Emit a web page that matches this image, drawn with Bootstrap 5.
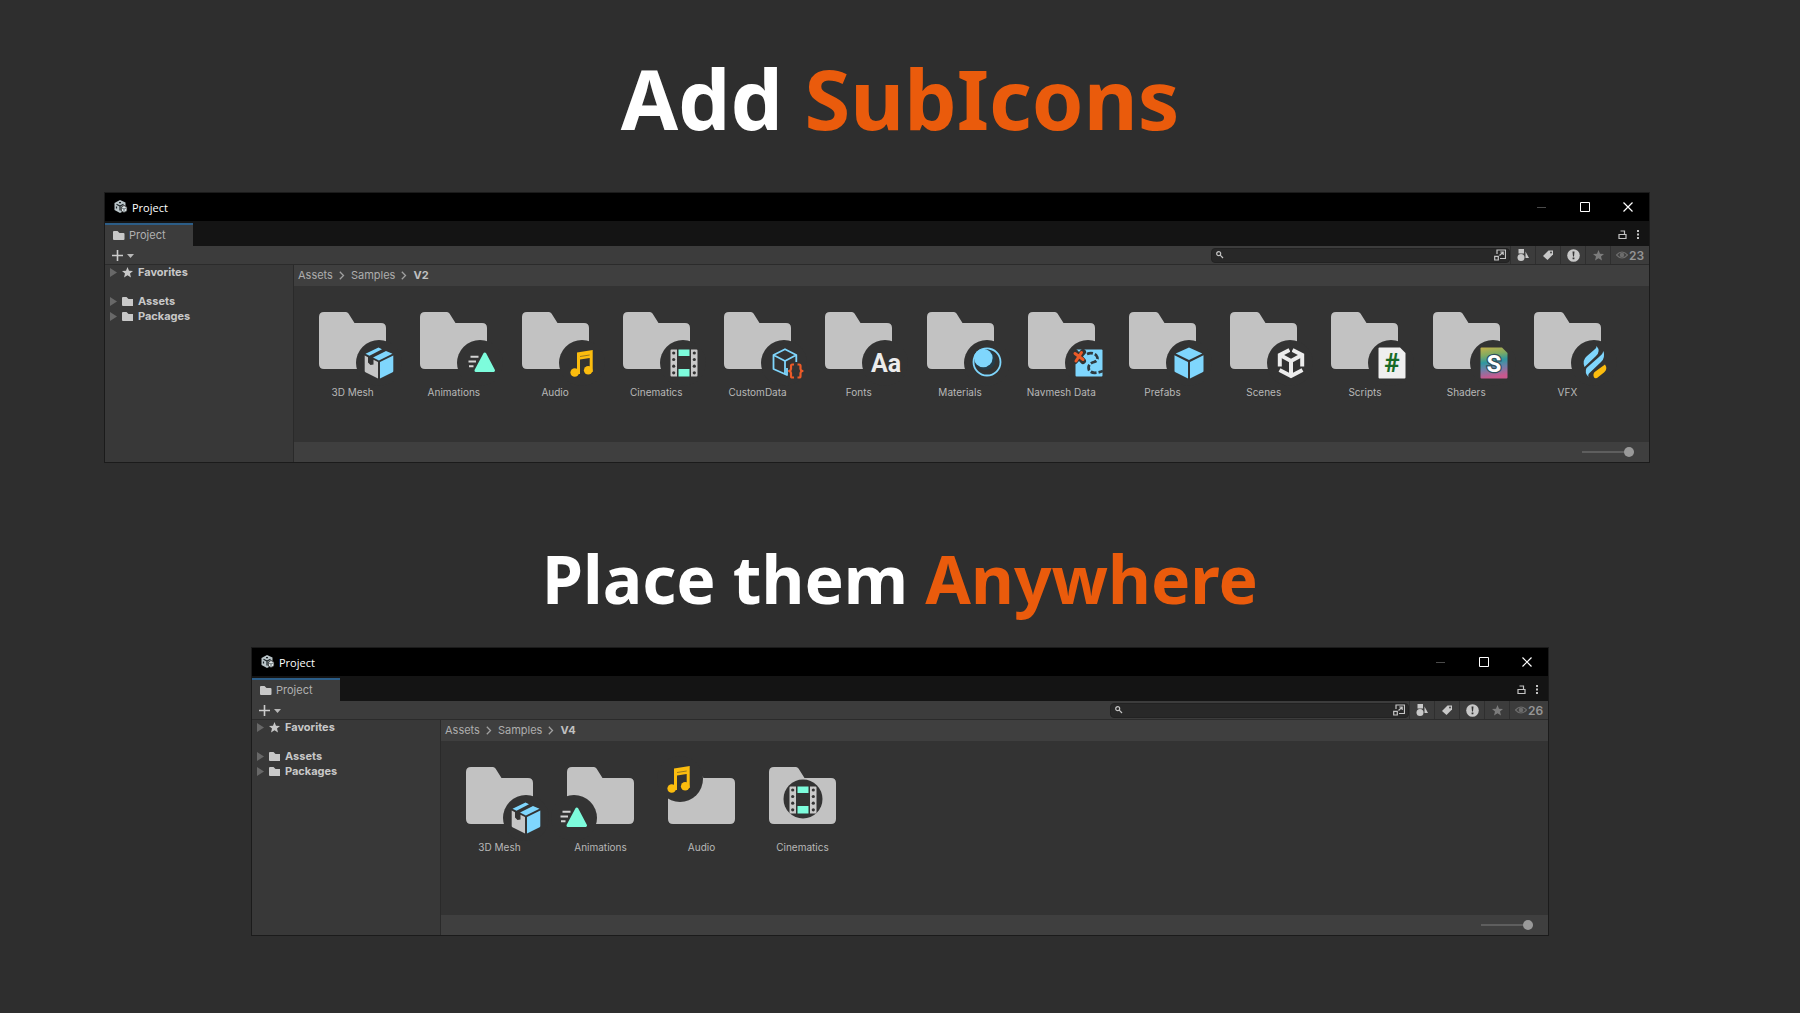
<!DOCTYPE html>
<html lang="en">
<head>
<meta charset="utf-8">
<meta name="viewport" content="width=device-width, initial-scale=1">
<title>SubIcons</title>
<link rel="stylesheet" href="https://cdn.jsdelivr.net/npm/bootstrap@5.3.0/dist/css/bootstrap.min.css">
<script src="https://cdn.jsdelivr.net/npm/bootstrap@5.3.0/dist/js/bootstrap.bundle.min.js"></script>
<style>
body{background:#2e2e2e;color:#bdbdbd;font-family:Inter,"Liberation Sans",sans-serif;font-size:12px;line-height:15px}
.headline{font-family:"Noto Sans","Open Sans",sans-serif;font-weight:700;color:#fff}
.headline em{font-style:normal;color:#ea5b0c}
.headline-lg{font-size:83px;line-height:100px;padding-top:48px;margin-bottom:44px}
.headline-md{font-size:66px;line-height:80px;padding-top:75px;margin-bottom:29px}
svg{display:block;flex:none}
button{background:none;border:0;padding:0;color:inherit;font:inherit}
.win{border:1px solid #1b1b1b;background:#383838}
.win-wide{margin-left:104px;margin-right:150px;height:271px}
.win-narrow{margin-left:251px;margin-right:251px;height:289px}
.titlebar{height:28px;background:#000;color:#fff;font-family:"Open Sans","Noto Sans",sans-serif;font-size:11px;padding-left:9px}
.titlebar .caption-btn{width:43px;height:28px}
.tabstrip{height:25px;background:#141414;padding-top:2px;padding-right:6px}
.tab{width:88px;background:#3c3c3c;border-top:2px solid #2c5d87;color:#b0b0b0;padding-left:8px;font-size:11px}
.tab-tools{gap:6px}
.toolbar{height:19px;background:#3c3c3c;border-bottom:1px solid #2b2b2b;padding-left:7px}
.searchbox{width:299px;height:15px;background:#282828;border:1px solid #222;border-radius:4px;padding:0 3px 0 4px}
.searchbox input{background:none;border:0;outline:0;height:12px;padding:0 4px;color:#ccc;font-size:11px;min-width:0}
.tool{width:24px;height:18px;border-left:1px solid #2f2f2f;box-sizing:content-box}
.tool-count{width:38px;color:#959595;font-weight:600;gap:1px}
.side{width:189px;background:#383838;border-right:1px solid #2a2a2a;font-weight:700;font-size:11px;color:#c8c8c8;padding-left:5px}
.side a{color:inherit;text-decoration:none;height:15px;gap:5px}
.side .gap-after{margin-bottom:14px}
.crumbs{height:21px;background:#3f3f3f;padding-left:4px;gap:6px;font-size:11px;color:#adadad;margin:0}
.crumbs a{color:inherit;text-decoration:none}
.crumbs b{font-weight:700;color:#c0c0c0}
.files{background:#333;padding-top:22px;padding-left:8px}
.files-fill{padding-right:31px}
.files-fill .item{flex:1 1 0}
.item{width:101px;font-size:10px;line-height:12px;color:#b8b8b8;text-decoration:none;text-align:center}
.item svg{overflow:visible}
.item span{margin-top:2px}
.foot{height:20px;background:#3f3f3f;padding-right:15px}
.size-range{appearance:none;-webkit-appearance:none;width:52px;height:10px;background:none;margin:0}
.size-range::-webkit-slider-runnable-track{height:2px;background:#5e5e5e}
.size-range::-webkit-slider-thumb{-webkit-appearance:none;width:10px;height:10px;border-radius:50%;background:#999;margin-top:-4px}
svg text{font-family:Roboto,"Liberation Sans",sans-serif;font-weight:700}
</style>
</head>
<body>
<svg width="0" height="0" class="position-absolute" aria-hidden="true">
<defs>
<linearGradient id="rainbow" x1="0" y1="0" x2="0.15" y2="1"><stop offset="0" stop-color="#c3b04a"/><stop offset=".28" stop-color="#7faa62"/><stop offset=".5" stop-color="#2e98a0"/><stop offset=".72" stop-color="#6f7fa8"/><stop offset="1" stop-color="#c9588f"/></linearGradient>
<path id="folder" fill="#c2c2c2" d="M5 0H27Q28.500 0 29.500 1.500L35.500 11H62Q67 11 67 16V52Q67 57 62 57H5Q0 57 0 52V5Q0 0 5 0Z"/>
<circle id="cut" r="23" fill="#333"/>
<g id="s-mesh">
<path fill="#c6c6c6" d="M-14.300-7.500-11-5.700V-.500L-8.500 2-5.500 1.500V-3.200L-1-1V15.500L-13.500 9.200Q-14.300 8.700-14.300 8Z"/>
<path fill="#7fd6fd" d="M1-1 14.300-7.500V8Q14.300 8.700 13.600 9.200L1 15.500ZM-13.500-9.300-.500-15.500 3-13.800-9.500-7.300ZM-6-5.400 7-12 13.500-9.300-.100-2.600Z"/>
</g>
<g id="s-anim">
<path fill="#7dfcdc" stroke="#7dfcdc" stroke-width="3" stroke-linejoin="round" d="M4.800-9 13.500 7.500H-4Z"/>
<path stroke="#d4d4d4" stroke-width="2" d="M-9.500-6.300H-1.500M-11.500-1.500H-4M-11 3.300H-6.500"/>
</g>
<g id="s-audio" fill="#fbbc0e">
<path d="M-5-10.500 10.700-13V9H7.700V-5L-2-3.500V11H-5Z"/><circle cx="-7.300" cy="9.500" r="4.300"/><circle cx="6.200" cy="7.300" r="4.300"/><path stroke="#333" stroke-width=".5" d="M-2-6.500 7.700-8"/>
</g>
<g id="s-film">
<path fill="#c9c9c9" d="M-12.500-13.500H-7V13.500H-12.500Q-13.500 13.500-13.500 12.500V-12.500Q-13.500-13.500-12.500-13.500ZM7-13.500H12.500Q13.500-13.500 13.500-12.500V12.500Q13.500 13.500 12.500 13.500H7Z"/>
<path fill="#7dfcdc" d="M-5.500-13.500H5.500V-7H-5.500ZM-5.500 6H5.500V13.500H-5.500Z"/>
<g fill="#333"><circle cx="-10.300" cy="-10" r="1.600"/><circle cx="-10.300" cy="-3.500" r="1.600"/><circle cx="-10.300" cy="3.200" r="1.600"/><circle cx="-10.300" cy="9.800" r="1.600"/><circle cx="10.300" cy="-10" r="1.600"/><circle cx="10.300" cy="-3.500" r="1.600"/><circle cx="10.300" cy="3.200" r="1.600"/><circle cx="10.300" cy="9.800" r="1.600"/></g>
</g>
<g id="s-data">
<path fill="none" stroke="#7fd6fd" stroke-width="1.800" stroke-linejoin="round" d="M3 5V12L-10.500 6V-8L1-13.800 12.300-8V-1M-10.500-8 1-2 12.300-8M1-2V11.300"/>
<rect x="4" y="0" width="16" height="16" fill="#333"/>
<g fill="none" stroke="#ec5b28" stroke-width="2.200" stroke-linejoin="round"><path d="M10 1.500H8.300Q7 1.500 7 3V6Q7 7.500 5 8Q7 8.500 7 10V13Q7 14.500 8.300 14.500H10"/><path d="M13.500 1.500H15.200Q16.500 1.500 16.500 3V6Q16.500 7.500 18.500 8Q16.500 8.500 16.500 10V13Q16.500 14.500 15.200 14.500H13.500"/></g>
</g>
<text id="s-font" x="1" y="9" font-size="25" text-anchor="middle" fill="#ececec">Aa</text>
<g id="s-mat"><circle r="13.500" fill="#333" stroke="#7fd6fd" stroke-width="1.800"/><circle cx="-2" cy="-2.500" r="10.500" fill="#253c49"/><circle cx="-3.700" cy="-4" r="9.300" fill="#7fd6fd"/></g>
<g id="s-nav">
<rect x="-13.500" y="-13.500" width="27" height="27" rx="1" fill="#7fd6fd"/>
<path fill="none" stroke="#2f3a40" stroke-width="2.800" stroke-dasharray="6 2" d="M-2-9Q3-11 7-8Q11-3 5-1Q-2 1 0 7Q3 12 14 8"/>
<path stroke="#333" stroke-width="6" stroke-linecap="round" d="M-14-11-6-2M-6-11-14-2"/>
<path stroke="#ec5b28" stroke-width="3" stroke-linecap="round" d="M-14-9.500-6-3.500M-7.500-10.500-13-2"/>
</g>
<g id="s-cube" fill="#7fd6fd"><path d="M0-15.500 13.300-9.500 0-3 -13.300-9.500ZM-14.500-7.700-1-1V15.500L-14 9Q-14.500 8.700-14.500 8ZM14.500-7.700 1-1V15.500L14 9Q14.500 8.700 14.500 8Z"/></g>
<g id="s-scene" fill="none" stroke="#ececec" stroke-width="4">
<path d="M-1.500-13-11.200-8V3.500M1.500-13 11.200-8V3.500M-11.500 7 0 13 11.500 7"/><path d="M-11-8 0-2 11-8M0-2V13"/><path stroke="#333" stroke-width="2" d="M0-16V-8"/>
</g>
<g id="s-script"><path fill="#efefef" d="M-12.500-15.500H8L13.500-10V14.500Q13.500 15.500 12.500 15.500H-12.500Q-13.500 15.500-13.500 14.500V-14.500Q-13.500-15.500-12.500-15.500Z"/><text y="9" font-size="26" text-anchor="middle" fill="#176b26">#</text></g>
<g id="s-shader"><path fill="url(#rainbow)" d="M-12.500-15.500H8L13.500-10V14.500Q13.500 15.500 12.500 15.500H-12.500Q-13.500 15.500-13.500 14.500V-14.500Q-13.500-15.500-12.500-15.500Z"/><text y="9" font-size="24" text-anchor="middle" fill="#fff" stroke="#30505c" stroke-width="2.500" paint-order="stroke">S</text></g>
<g id="s-vfx"><path fill="#7fd6fd" d="M1.500-17Q6-12 1-7L-10.500 4Q-13-3-8-7L-1-13Q2-15 1.500-17ZM8.500-12Q10.500-5 6-1L-5 9.500Q-8 12-6 14.500Q-11 10-8.500 5L4-6Q8-9 8.500-12Z"/><path fill="#fbbc0e" d="M10 1.500Q13 6 9 9.500L2 15Q-2 16-1.500 11Q-1 9 1 8Z"/></g>
<g id="i-folder"><path fill="#c8c8c8" d="M1 0H4.500L6.500 2H10.500Q11.500 2 11.500 3V8Q11.500 9 10.500 9H1Q0 9 0 8V1Q0 0 1 0Z"/></g>
<path id="i-star" d="M5.500 0 7 3.700 11 4 8 6.500 9 10.500 5.500 8.300 2 10.500 3 6.500 0 4 4 3.700Z"/>
<path id="i-arrow" fill="#686868" d="M0 0 7 4.500 0 9Z"/>
<g id="i-app"><path fill="#b9c4c8" d="M6 0 11.500 2.500V7L8 12 6 13 .500 10V3Z"/><path stroke="#1c2326" fill="none" stroke-width="1.200" d="M2.500 4.300 6 6 9.500 4.300M6 6V10.500M2.500 6.500V8.500M5 2.700H7"/><path fill="#dfe6e8" stroke="#111" stroke-width=".8" d="M10 5.500 13 7V11L10 12.700 7.300 11V7Z"/><path stroke="#59666b" stroke-width=".9" d="M10 9V12M10 9 12 8M10 9 8 8"/></g>
<g id="i-lock" fill="none" stroke="#c4c4c4" stroke-width="1.200"><path d="M1 4.500H8V8.500H1ZM2.500 1H6.500V4.500"/></g>
<g id="i-dots" fill="#c4c4c4"><path d="M0 0H2V2H0ZM0 3.500H2V5.500H0ZM0 7H2V9H0Z"/></g>
<g id="i-plus"><path stroke="#ccc" stroke-width="1.600" d="M0 5.500H11M5.500 0V11"/><path fill="#b8b8b8" d="M15 4H22L18.500 8Z"/></g>
<g id="i-glass" fill="none" stroke="#c4c4c4" stroke-width="1.200"><circle cx="2.700" cy="2.700" r="2"/><path d="M4.200 4.200 7 7"/></g>
<g id="i-pop" fill="none" stroke="#c4c4c4" stroke-width="1.200"><path d="M3 5V1H11.500V9.500H6M.700 7.300H4.300V11H.700ZM5.500 6.500 9 3.200M6.300 3H9.200V6"/></g>
<g id="i-types" fill="#c8c8c8"><path d="M1.500 0H7V4.500H1.500ZM8.500 2.500 12 9H8.500Z"/><circle cx="4" cy="8.500" r="3.500"/></g>
<g id="i-tag"><path fill="#c8c8c8" d="M5.500.500H10V4.500L4.500 10 0 6Z"/><circle cx="8" cy="2.500" r=".9" fill="#3c3c3c"/></g>
<g id="i-warn"><circle cx="6.500" cy="6.500" r="6.300" fill="#c8c8c8"/><path fill="#333" d="M5.500 2.500H7.500L7 7.500H6ZM5.600 8.500H7.400V10.300H5.600Z"/></g>
<g id="i-eye"><path fill="none" stroke="#6c6c6c" stroke-width="1.200" d="M.500 4Q6-2 11.500 4Q6 10 .500 4Z"/><circle cx="6" cy="4" r="2.300" fill="#6c6c6c"/></g>
<path id="i-chev" fill="none" stroke="#a0a0a0" stroke-width="1.300" d="M.800.800 4.500 4.500.800 8.200"/>
</defs>
</svg>

<main>
<h1 class="headline headline-lg text-center">Add <em>SubIcons</em></h1>

<section class="win win-wide d-flex flex-column" aria-label="Project window V2">
  <header class="titlebar d-flex align-items-center">
    <svg width="14" height="14"><use href="#i-app"/></svg><span class="ms-1">Project</span>
    <div class="ms-auto d-flex">
      <button class="caption-btn d-flex align-items-center justify-content-center" aria-label="Minimize"><svg width="10" height="10"><path stroke="#4a4a4a" d="M0 5.500H9"/></svg></button>
      <button class="caption-btn d-flex align-items-center justify-content-center" aria-label="Maximize"><svg width="10" height="10"><path stroke="#fff" fill="none" d="M.500.500H9.500V9.500H.500Z"/></svg></button>
      <button class="caption-btn d-flex align-items-center justify-content-center" aria-label="Close"><svg width="10" height="10"><path stroke="#fff" stroke-width="1.200" d="M.500.500 9.500 9.500M9.500.500.500 9.500"/></svg></button>
    </div>
  </header>
  <div class="tabstrip d-flex">
    <button class="tab d-flex align-items-center"><svg width="12" height="9" class="me-1"><use href="#i-folder"/></svg>Project</button>
    <div class="ms-auto d-flex align-items-center tab-tools"><button aria-label="Lock"><svg width="9" height="9"><use href="#i-lock"/></svg></button><button class="px-1" aria-label="Menu"><svg width="2" height="9"><use href="#i-dots"/></svg></button></div>
  </div>
  <div class="toolbar d-flex align-items-center">
    <button aria-label="Create"><svg width="22" height="11"><use href="#i-plus"/></svg></button>
    <div class="searchbox d-flex align-items-center ms-auto"><svg width="8" height="8"><use href="#i-glass"/></svg><input class="flex-grow-1" type="search" aria-label="Search assets"><svg width="12" height="12"><use href="#i-pop"/></svg></div>
    <button class="tool d-flex align-items-center justify-content-center" aria-label="Filter by type"><svg width="12" height="12"><use href="#i-types"/></svg></button>
    <button class="tool d-flex align-items-center justify-content-center" aria-label="Filter by label"><svg width="10" height="10"><use href="#i-tag"/></svg></button>
    <button class="tool d-flex align-items-center justify-content-center" aria-label="Filter by log"><svg width="13" height="13"><use href="#i-warn"/></svg></button>
    <button class="tool d-flex align-items-center justify-content-center" aria-label="Save search"><svg width="11" height="11" fill="#7c7c7c"><use href="#i-star"/></svg></button>
    <button class="tool tool-count d-flex align-items-center justify-content-center"><svg width="12" height="8"><use href="#i-eye"/></svg>23</button>
  </div>
  <div class="d-flex flex-grow-1">
    <nav class="side flex-shrink-0" aria-label="Folders">
      <a href="#" class="d-flex align-items-center gap-after"><svg width="7" height="9"><use href="#i-arrow"/></svg><svg width="11" height="11" fill="#c8c8c8"><use href="#i-star"/></svg>Favorites</a>
      <a href="#" class="d-flex align-items-center"><svg width="7" height="9"><use href="#i-arrow"/></svg><svg width="11" height="9"><use href="#i-folder"/></svg>Assets</a>
      <a href="#" class="d-flex align-items-center"><svg width="7" height="9"><use href="#i-arrow"/></svg><svg width="11" height="9"><use href="#i-folder"/></svg>Packages</a>
    </nav>
    <div class="flex-grow-1 d-flex flex-column">
      <nav class="crumbs d-flex align-items-center" aria-label="Path"><a href="#">Assets</a><svg width="6" height="9"><use href="#i-chev"/></svg><a href="#">Samples</a><svg width="6" height="9"><use href="#i-chev"/></svg><b>V2</b></nav>
      <div class="files files-fill d-flex flex-grow-1">
        <a href="#" class="item d-flex flex-column align-items-center"><svg width="83" height="76" viewBox="-8 -4 83 76"><use href="#folder"/><use href="#cut" x="60" y="51"/><use href="#s-mesh" x="60" y="51"/></svg><span>3D Mesh</span></a>
        <a href="#" class="item d-flex flex-column align-items-center"><svg width="83" height="76" viewBox="-8 -4 83 76"><use href="#folder"/><use href="#cut" x="60" y="51"/><use href="#s-anim" x="60" y="51"/></svg><span>Animations</span></a>
        <a href="#" class="item d-flex flex-column align-items-center"><svg width="83" height="76" viewBox="-8 -4 83 76"><use href="#folder"/><use href="#cut" x="60" y="51"/><use href="#s-audio" x="60" y="51"/></svg><span>Audio</span></a>
        <a href="#" class="item d-flex flex-column align-items-center"><svg width="83" height="76" viewBox="-8 -4 83 76"><use href="#folder"/><use href="#cut" x="60" y="51"/><use href="#s-film" x="61" y="51"/></svg><span>Cinematics</span></a>
        <a href="#" class="item d-flex flex-column align-items-center"><svg width="83" height="76" viewBox="-8 -4 83 76"><use href="#folder"/><use href="#cut" x="60" y="51"/><use href="#s-data" x="60" y="51"/></svg><span>CustomData</span></a>
        <a href="#" class="item d-flex flex-column align-items-center"><svg width="83" height="76" viewBox="-8 -4 83 76"><use href="#folder"/><use href="#cut" x="60" y="51"/><use href="#s-font" x="60" y="51"/></svg><span>Fonts</span></a>
        <a href="#" class="item d-flex flex-column align-items-center"><svg width="83" height="76" viewBox="-8 -4 83 76"><use href="#folder"/><use href="#cut" x="60" y="51"/><use href="#s-mat" x="60" y="50"/></svg><span>Materials</span></a>
        <a href="#" class="item d-flex flex-column align-items-center"><svg width="83" height="76" viewBox="-8 -4 83 76"><use href="#folder"/><use href="#cut" x="60" y="51"/><use href="#s-nav" x="61" y="51"/></svg><span>Navmesh Data</span></a>
        <a href="#" class="item d-flex flex-column align-items-center"><svg width="83" height="76" viewBox="-8 -4 83 76"><use href="#folder"/><use href="#cut" x="60" y="51"/><use href="#s-cube" x="60" y="51"/></svg><span>Prefabs</span></a>
        <a href="#" class="item d-flex flex-column align-items-center"><svg width="83" height="76" viewBox="-8 -4 83 76"><use href="#folder"/><use href="#cut" x="60" y="51"/><use href="#s-scene" x="61" y="51"/></svg><span>Scenes</span></a>
        <a href="#" class="item d-flex flex-column align-items-center"><svg width="83" height="76" viewBox="-8 -4 83 76"><use href="#folder"/><use href="#cut" x="60" y="51"/><use href="#s-script" x="61" y="51"/></svg><span>Scripts</span></a>
        <a href="#" class="item d-flex flex-column align-items-center"><svg width="83" height="76" viewBox="-8 -4 83 76"><use href="#folder"/><use href="#cut" x="60" y="51"/><use href="#s-shader" x="61" y="51"/></svg><span>Shaders</span></a>
        <a href="#" class="item d-flex flex-column align-items-center"><svg width="83" height="76" viewBox="-8 -4 83 76"><use href="#folder"/><use href="#cut" x="60" y="51"/><use href="#s-vfx" x="61" y="51"/></svg><span>VFX</span></a>
      </div>
      <div class="foot d-flex align-items-center justify-content-end"><input class="size-range" type="range" value="100" aria-label="Icon size"></div>
    </div>
  </div>
</section>

<h2 class="headline headline-md text-center">Place them <em>Anywhere</em></h2>

<section class="win win-narrow d-flex flex-column" aria-label="Project window V4">
  <header class="titlebar d-flex align-items-center">
    <svg width="14" height="14"><use href="#i-app"/></svg><span class="ms-1">Project</span>
    <div class="ms-auto d-flex">
      <button class="caption-btn d-flex align-items-center justify-content-center" aria-label="Minimize"><svg width="10" height="10"><path stroke="#4a4a4a" d="M0 5.500H9"/></svg></button>
      <button class="caption-btn d-flex align-items-center justify-content-center" aria-label="Maximize"><svg width="10" height="10"><path stroke="#fff" fill="none" d="M.500.500H9.500V9.500H.500Z"/></svg></button>
      <button class="caption-btn d-flex align-items-center justify-content-center" aria-label="Close"><svg width="10" height="10"><path stroke="#fff" stroke-width="1.200" d="M.500.500 9.500 9.500M9.500.500.500 9.500"/></svg></button>
    </div>
  </header>
  <div class="tabstrip d-flex">
    <button class="tab d-flex align-items-center"><svg width="12" height="9" class="me-1"><use href="#i-folder"/></svg>Project</button>
    <div class="ms-auto d-flex align-items-center tab-tools"><button aria-label="Lock"><svg width="9" height="9"><use href="#i-lock"/></svg></button><button class="px-1" aria-label="Menu"><svg width="2" height="9"><use href="#i-dots"/></svg></button></div>
  </div>
  <div class="toolbar d-flex align-items-center">
    <button aria-label="Create"><svg width="22" height="11"><use href="#i-plus"/></svg></button>
    <div class="searchbox d-flex align-items-center ms-auto"><svg width="8" height="8"><use href="#i-glass"/></svg><input class="flex-grow-1" type="search" aria-label="Search assets"><svg width="12" height="12"><use href="#i-pop"/></svg></div>
    <button class="tool d-flex align-items-center justify-content-center" aria-label="Filter by type"><svg width="12" height="12"><use href="#i-types"/></svg></button>
    <button class="tool d-flex align-items-center justify-content-center" aria-label="Filter by label"><svg width="10" height="10"><use href="#i-tag"/></svg></button>
    <button class="tool d-flex align-items-center justify-content-center" aria-label="Filter by log"><svg width="13" height="13"><use href="#i-warn"/></svg></button>
    <button class="tool d-flex align-items-center justify-content-center" aria-label="Save search"><svg width="11" height="11" fill="#7c7c7c"><use href="#i-star"/></svg></button>
    <button class="tool tool-count d-flex align-items-center justify-content-center"><svg width="12" height="8"><use href="#i-eye"/></svg>26</button>
  </div>
  <div class="d-flex flex-grow-1">
    <nav class="side flex-shrink-0" aria-label="Folders">
      <a href="#" class="d-flex align-items-center gap-after"><svg width="7" height="9"><use href="#i-arrow"/></svg><svg width="11" height="11" fill="#c8c8c8"><use href="#i-star"/></svg>Favorites</a>
      <a href="#" class="d-flex align-items-center"><svg width="7" height="9"><use href="#i-arrow"/></svg><svg width="11" height="9"><use href="#i-folder"/></svg>Assets</a>
      <a href="#" class="d-flex align-items-center"><svg width="7" height="9"><use href="#i-arrow"/></svg><svg width="11" height="9"><use href="#i-folder"/></svg>Packages</a>
    </nav>
    <div class="flex-grow-1 d-flex flex-column">
      <nav class="crumbs d-flex align-items-center" aria-label="Path"><a href="#">Assets</a><svg width="6" height="9"><use href="#i-chev"/></svg><a href="#">Samples</a><svg width="6" height="9"><use href="#i-chev"/></svg><b>V4</b></nav>
      <div class="files d-flex flex-grow-1">
        <a href="#" class="item d-flex flex-column align-items-center"><svg width="83" height="76" viewBox="-8 -4 83 76"><use href="#folder"/><use href="#cut" x="60" y="51"/><use href="#s-mesh" x="60" y="51"/></svg><span>3D Mesh</span></a>
        <a href="#" class="item d-flex flex-column align-items-center"><svg width="83" height="76" viewBox="-8 -4 83 76"><use href="#folder"/><use href="#cut" x="7" y="51"/><use href="#s-anim" x="5" y="51"/></svg><span>Animations</span></a>
        <a href="#" class="item d-flex flex-column align-items-center"><svg width="83" height="76" viewBox="-8 -4 83 76"><use href="#folder"/><use href="#cut" x="12" y="12"/><use href="#s-audio" x="11" y="12"/></svg><span>Audio</span></a>
        <a href="#" class="item d-flex flex-column align-items-center"><svg width="83" height="76" viewBox="-8 -4 83 76"><use href="#folder"/><circle cx="34" cy="32" r="19.500" fill="#333"/><use href="#s-film" x="34" y="33"/></svg><span>Cinematics</span></a>
      </div>
      <div class="foot d-flex align-items-center justify-content-end"><input class="size-range" type="range" value="100" aria-label="Icon size"></div>
    </div>
  </div>
</section>
</main>
</body>
</html>
